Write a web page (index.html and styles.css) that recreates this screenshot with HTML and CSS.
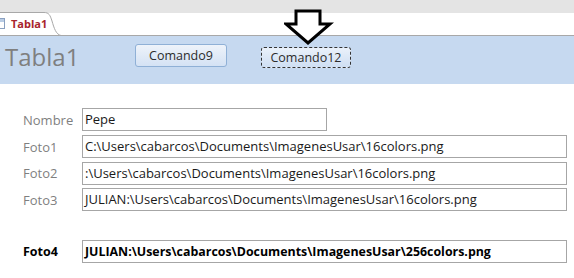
FILE: index.html
```html
<!DOCTYPE html>
<html>
<head>
<meta charset="utf-8">
<link rel="stylesheet" href="styles.css">
</head>
<body>
<div class="page">
  <div class="tabstrip">
    <div class="tab">
      <svg class="tabshape" width="62" height="24" viewBox="0 0 62 24">
        <path d="M0 0.5 H44 C49 0.5 50 3 52 9 C54 16 56 22.5 61 23.5" fill="#fff" stroke="#a8a8a8" stroke-width="1"/>
      </svg>
      <span class="tabicon"></span>
      <span class="tabtext">Tabla1</span>
    </div>
  </div>
  <div class="header">
    <div class="title">Tabla1</div>
    <button class="btn b9">Comando9</button>
    <button class="btn b12">Comando12</button>
  </div>
  <svg class="arrow" width="50" height="38" viewBox="0 0 50 38">
    <path d="M12 3 H36 V16 H46 L24 35 L2 16 H12 Z" fill="#fff" stroke="#000" stroke-width="3" stroke-linejoin="miter"/>
  </svg>
  <div class="form">
    <div class="row">
      <label class="lbl">Nombre</label>
      <div class="field short">Pepe</div>
    </div>
    <div class="row">
      <label class="lbl">Foto1</label>
      <div class="field">C:\Users\cabarcos\Documents\ImagenesUsar\16colors.png</div>
    </div>
    <div class="row">
      <label class="lbl">Foto2</label>
      <div class="field">:\Users\cabarcos\Documents\ImagenesUsar\16colors.png</div>
    </div>
    <div class="row">
      <label class="lbl">Foto3</label>
      <div class="field">JULIAN:\Users\cabarcos\Documents\ImagenesUsar\16colors.png</div>
    </div>
    <div class="row bold">
      <label class="lbl">Foto4</label>
      <div class="field">JULIAN:\Users\cabarcos\Documents\ImagenesUsar\256colors.png</div>
    </div>
  </div>
</div>
</body>
</html>
```
FILE: styles.css
```css
html, body {
  margin: 0;
  padding: 0;
  background: #fff;
}
.page {
  position: relative;
  width: 574px;
  height: 278px;
  overflow: hidden;
  font-family: "Open Sans", "Liberation Sans", sans-serif;
}
.tabstrip {
  height: 36px;
  background: linear-gradient(#e4e4e4 0, #e4e4e4 13px, #fff 13px);
  border-bottom: 1px solid #a8a8a8;
  box-sizing: border-box;
  display: flex;
  align-items: flex-end;
}
.tab {
  position: relative;
  width: 62px;
  height: 24px;
  margin-bottom: -1px;
  display: flex;
  align-items: center;
}
.tabshape {
  position: absolute;
  left: 0;
  top: 0;
}
.tabicon {
  position: relative;
  width: 4px;
  height: 9px;
  margin-top: -2px;
  border: 1px solid #8aa0c0;
  border-left: none;
  background: linear-gradient(#b9cce4 0 3px, #fff 3px);
  margin-right: 6px;
}
.tabtext {
  position: relative;
  color: #a8242d;
  font-weight: bold;
  font-size: 11px;
  margin-top: -2px;
}
.header {
  height: 48px;
  background: #c6d9f0;
  display: flex;
  align-items: flex-start;
}
.title {
  font-size: 24px;
  color: #7f7f7f;
  margin-left: 5px;
  margin-top: 5px;
  line-height: 32px;
  width: 130px;
}
.btn {
  font-family: "Open Sans", "Liberation Sans", sans-serif;
  font-size: 12.5px;
  color: #2c2c2c;
  padding: 0;
  line-height: 20px;
  height: 23px;
  border-radius: 3px;
  cursor: default;
}
.b9 {
  width: 92px;
  margin-top: 8px;
  border: 1px solid #8fb0d6;
  background: linear-gradient(#eef3fa, #d4e2f4);
}
.b12 {
  width: 90px;
  height: 21px;
  line-height: 18px;
  margin-top: 11px;
  margin-left: 34px;
  border: 1px dashed #333;
  background: linear-gradient(#eaf1fa, #cfdff3);
}
.arrow {
  position: absolute;
  left: 284px;
  top: 8px;
}
.form {
  display: flex;
  flex-direction: column;
  padding-top: 24px;
  gap: 3px;
}
.row {
  display: flex;
  align-items: center;
  height: 23.7px;
}
.lbl {
  width: 59px;
  padding-left: 23px;
  color: #7f7f7f;
  font-size: 13px;
}
.field {
  width: 485px;
  height: 23px;
  box-sizing: border-box;
  border: 1px solid #a6a6a6;
  font-size: 13px;
  line-height: 21px;
  padding-left: 2px;
  color: #1a1a1a;
  white-space: nowrap;
  overflow: hidden;
}
.field.short {
  width: 245px;
}
.row.bold {
  margin-top: 25px;
}
.row.bold .lbl {
  color: #000;
  font-weight: bold;
  font-size: 12.5px;
}
.row.bold .field {
  font-weight: bold;
  font-size: 12.4px;
  color: #000;
}
```
